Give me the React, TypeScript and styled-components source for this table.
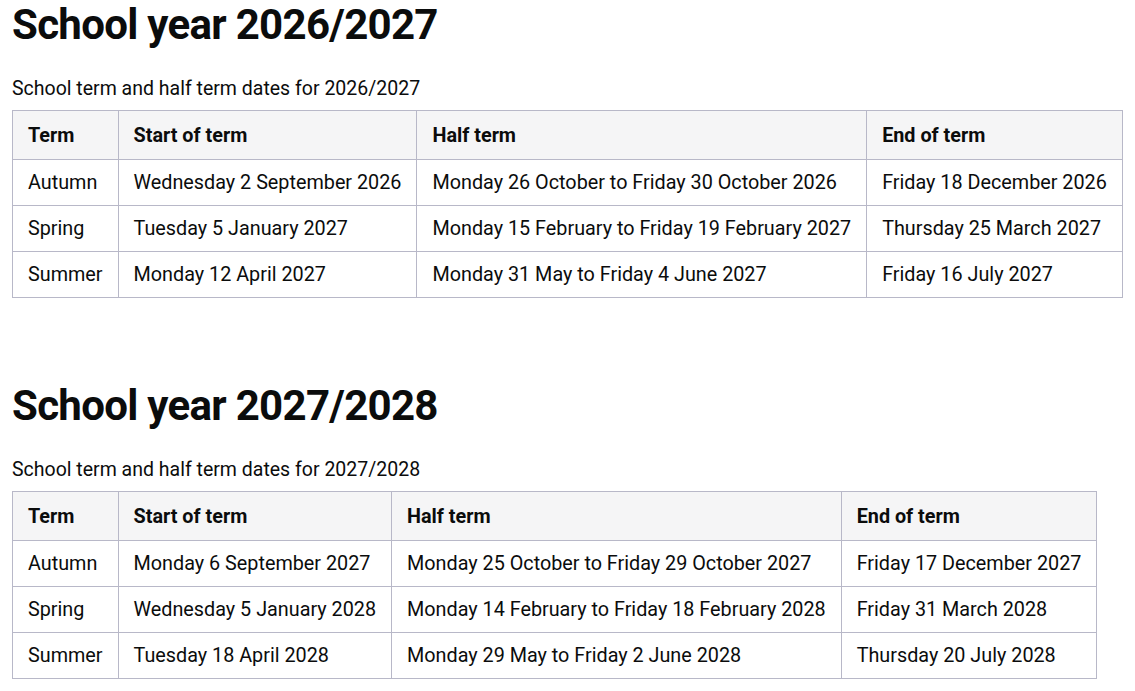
import styled, { createGlobalStyle } from "styled-components";

const GlobalStyle = createGlobalStyle`
  body {
    margin: 0;
    background: #ffffff;
    color: #0b0c0c;
    font-family: Roboto, "Liberation Sans", Arial, sans-serif;
  }
`;

type Row = { term: string; start: string; half: string; end: string };

const years: { title: string; rows: Row[] }[] = [
  {
    title: "2026/2027",
    rows: [
      {
        term: "Autumn",
        start: "Wednesday 2 September 2026",
        half: "Monday 26 October to Friday 30 October 2026",
        end: "Friday 18 December 2026",
      },
      {
        term: "Spring",
        start: "Tuesday 5 January 2027",
        half: "Monday 15 February to Friday 19 February 2027",
        end: "Thursday 25 March 2027",
      },
      {
        term: "Summer",
        start: "Monday 12 April 2027",
        half: "Monday 31 May to Friday 4 June 2027",
        end: "Friday 16 July 2027",
      },
    ],
  },
  {
    title: "2027/2028",
    rows: [
      {
        term: "Autumn",
        start: "Monday 6 September 2027",
        half: "Monday 25 October to Friday 29 October 2027",
        end: "Friday 17 December 2027",
      },
      {
        term: "Spring",
        start: "Wednesday 5 January 2028",
        half: "Monday 14 February to Friday 18 February 2028",
        end: "Friday 31 March 2028",
      },
      {
        term: "Summer",
        start: "Tuesday 18 April 2028",
        half: "Monday 29 May to Friday 2 June 2028",
        end: "Thursday 20 July 2028",
      },
    ],
  },
];

function App() {
  return (
    <Page>
      <GlobalStyle />
      {years.map((year) => (
        <Section key={year.title}>
          <Heading>School year {year.title}</Heading>
          <Table>
            <Caption>School term and half term dates for {year.title}</Caption>
            <thead>
              <tr>
                <Th>Term</Th>
                <Th>Start of term</Th>
                <Th>Half term</Th>
                <Th>End of term</Th>
              </tr>
            </thead>
            <tbody>
              {year.rows.map((row) => (
                <tr key={row.term}>
                  <Td>{row.term}</Td>
                  <Td>{row.start}</Td>
                  <Td>{row.half}</Td>
                  <Td>{row.end}</Td>
                </tr>
              ))}
            </tbody>
          </Table>
        </Section>
      ))}
    </Page>
  );
}

export default App;

const Page = styled.div`
  display: flex;
  flex-direction: column;
  gap: 83px;
  padding: 0 12px;
`;

const Section = styled.section`
  display: flex;
  flex-direction: column;
`;

const Heading = styled.h2`
  margin: 0 0 28px;
  font-size: 42px;
  line-height: 50px;
  font-weight: 700;
  letter-spacing: -0.7px;
  color: #0b0c0c;
`;

const Table = styled.table`
  border-collapse: collapse;
  font-size: 19.8px;
  line-height: 22px;
  align-self: flex-start;
`;

const Caption = styled.caption`
  caption-side: top;
  text-align: left;
  padding-bottom: 10px;
  font-size: 19.5px;
  line-height: 22px;
  font-weight: 400;
`;

const Th = styled.th`
  border: 1px solid #b8b8c8;
  background: #f5f5f6;
  padding: 14px 15px 12px;
  text-align: left;
  font-weight: 700;
`;

const Td = styled.td`
  border: 1px solid #b8b8c8;
  padding: 12px 15px 11px;
  text-align: left;
`;
